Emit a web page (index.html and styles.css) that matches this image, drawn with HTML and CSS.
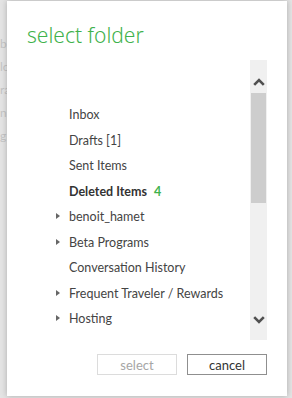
FILE: index.html
```html
<!DOCTYPE html>
<html lang="en">
<head>
    <meta charset="UTF-8">
    <meta name="viewport" content="width=device-width, initial-scale=1.0">
    <title>Select folder</title>
    <link rel="stylesheet" href="styles.css">
</head>
<body>
    <div class="backdrop">
        <div class="bg-text bg-left">
            <span>b</span>
            <span>lc</span>
            <span>ra</span>
            <span>n</span>
            <span>g</span>
        </div>
    </div>

    <div class="dialog">
        <h1 class="title">select folder</h1>

        <div class="picker">
            <ul class="folders">
                <li class="folder">Inbox</li>
                <li class="folder">Drafts [1]</li>
                <li class="folder">Sent Items</li>
                <li class="folder current">Deleted Items <span class="count">4</span></li>
                <li class="folder has-children">benoit_hamet</li>
                <li class="folder has-children">Beta Programs</li>
                <li class="folder">Conversation History</li>
                <li class="folder has-children">Frequent Traveler / Rewards</li>
                <li class="folder has-children">Hosting</li>
            </ul>
            <div class="scrollbar">
                <div class="arrow up">
                    <svg width="12" height="8" viewBox="0 0 12 8"><path d="M1.2 6.8 L6 2 L10.8 6.8" fill="none" stroke="#505050" stroke-width="2.6"/></svg>
                </div>
                <div class="thumb"></div>
                <div class="track"></div>
                <div class="arrow down">
                    <svg width="12" height="8" viewBox="0 0 12 8"><path d="M1.2 1.2 L6 6 L10.8 1.2" fill="none" stroke="#505050" stroke-width="2.6"/></svg>
                </div>
            </div>
        </div>

        <div class="actions">
            <button class="btn" disabled>select</button>
            <button class="btn">cancel</button>
        </div>
    </div>
</body>
</html>
```

FILE: styles.css
```css
body {
    margin: 0;
    width: 292px;
    height: 398px;
    overflow: hidden;
    background: #e4e4e4;
    font-family: Lato, "Noto Sans", sans-serif;
    position: relative;
}

.backdrop {
    position: absolute;
    inset: 0;
}

.bg-text {
    color: #c4c4c4;
    font-size: 12px;
    display: flex;
    flex-direction: column;
}

.bg-left {
    padding: 36px 0 0 0;
    gap: 8px;
}

.dialog {
    position: absolute;
    left: 7px;
    top: 1px;
    width: 280px;
    height: 395px;
    box-sizing: border-box;
    background: #fff;
    box-shadow: 0 0 6px rgba(0, 0, 0, 0.25);
    padding: 0 20px;
    display: flex;
    flex-direction: column;
}

.title {
    margin: 20px 0 0 0;
    font-family: "Noto Sans", sans-serif;
    font-size: 21px;
    font-weight: 300;
    line-height: 28px;
    color: #3fb24c;
}

.picker {
    margin-top: 11px;
    height: 280px;
    display: flex;
}

.folders {
    flex: 1;
    list-style: none;
    margin: 0;
    padding: 42px 0 0 42px;
    font-size: 12.5px;
    color: #444;
}

.folder {
    position: relative;
    height: 25.5px;
    line-height: 26px;
    white-space: nowrap;
}

.folder.current {
    font-weight: bold;
    color: #333;
}

.count {
    color: #3fb24c;
    margin-left: 4px;
}

.has-children::before {
    content: "";
    position: absolute;
    left: -13px;
    top: 9px;
    border-left: 4px solid #666;
    border-top: 3.5px solid transparent;
    border-bottom: 3.5px solid transparent;
}

.scrollbar {
    width: 17px;
    background: #f0f0f0;
    display: flex;
    flex-direction: column;
}

.arrow {
    height: 33px;
    display: flex;
    align-items: center;
    justify-content: center;
}

.arrow.up {
    padding-top: 10px;
    box-sizing: border-box;
}

.arrow.down {
    height: 30px;
    align-items: flex-start;
    padding-top: 6px;
    box-sizing: border-box;
}

.thumb {
    height: 110px;
    margin: 0 1px;
    background: #cdcdcd;
}

.track {
    flex: 1;
}

.actions {
    margin-top: 14px;
    display: flex;
    justify-content: flex-end;
    gap: 10px;
}

.btn {
    width: 80px;
    height: 21px;
    padding: 0;
    background: #fff;
    border: 1px solid #8f8f8f;
    font-family: inherit;
    font-size: 13px;
    color: #333;
}

.btn:disabled {
    border-color: #dcdcdc;
    color: #a6a6a6;
}
```
